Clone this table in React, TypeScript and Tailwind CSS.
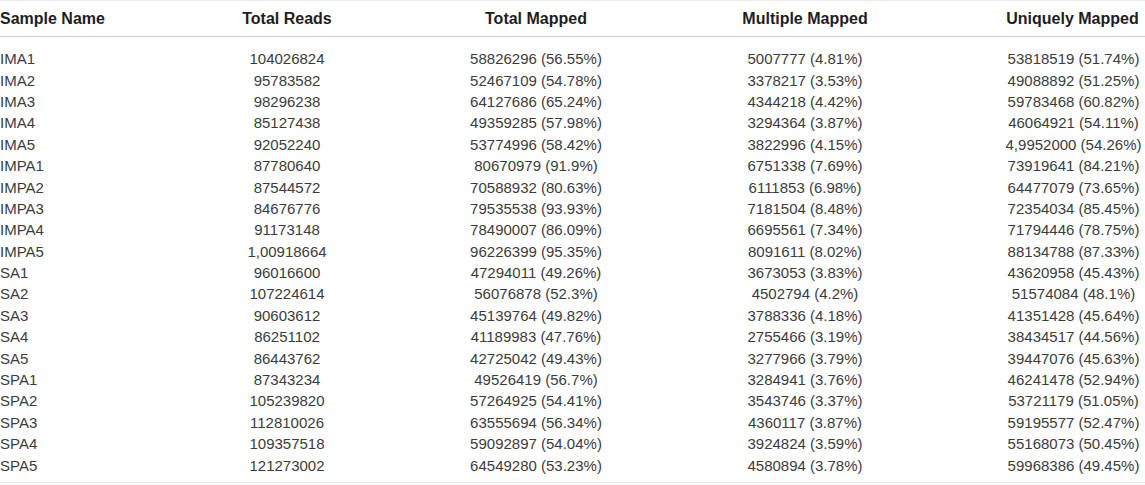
import React from "react"

type Row = [string, string, string, string, string]

const rows: Row[] = [
    ["IMA1", "104026824", "58826296 (56.55%)", "5007777 (4.81%)", "53818519 (51.74%)"],
    ["IMA2", "95783582", "52467109 (54.78%)", "3378217 (3.53%)", "49088892 (51.25%)"],
    ["IMA3", "98296238", "64127686 (65.24%)", "4344218 (4.42%)", "59783468 (60.82%)"],
    ["IMA4", "85127438", "49359285 (57.98%)", "3294364 (3.87%)", "46064921 (54.11%)"],
    ["IMA5", "92052240", "53774996 (58.42%)", "3822996 (4.15%)", "4,9952000 (54.26%)"],
    ["IMPA1", "87780640", "80670979 (91.9%)", "6751338 (7.69%)", "73919641 (84.21%)"],
    ["IMPA2", "87544572", "70588932 (80.63%)", "6111853 (6.98%)", "64477079 (73.65%)"],
    ["IMPA3", "84676776", "79535538 (93.93%)", "7181504 (8.48%)", "72354034 (85.45%)"],
    ["IMPA4", "91173148", "78490007 (86.09%)", "6695561 (7.34%)", "71794446 (78.75%)"],
    ["IMPA5", "1,00918664", "96226399 (95.35%)", "8091611 (8.02%)", "88134788 (87.33%)"],
    ["SA1", "96016600", "47294011 (49.26%)", "3673053 (3.83%)", "43620958 (45.43%)"],
    ["SA2", "107224614", "56076878 (52.3%)", "4502794 (4.2%)", "51574084 (48.1%)"],
    ["SA3", "90603612", "45139764 (49.82%)", "3788336 (4.18%)", "41351428 (45.64%)"],
    ["SA4", "86251102", "41189983 (47.76%)", "2755466 (3.19%)", "38434517 (44.56%)"],
    ["SA5", "86443762", "42725042 (49.43%)", "3277966 (3.79%)", "39447076 (45.63%)"],
    ["SPA1", "87343234", "49526419 (56.7%)", "3284941 (3.76%)", "46241478 (52.94%)"],
    ["SPA2", "105239820", "57264925 (54.41%)", "3543746 (3.37%)", "53721179 (51.05%)"],
    ["SPA3", "112810026", "63555694 (56.34%)", "4360117 (3.87%)", "59195577 (52.47%)"],
    ["SPA4", "109357518", "59092897 (54.04%)", "3924824 (3.59%)", "55168073 (50.45%)"],
    ["SPA5", "121273002", "64549280 (53.23%)", "4580894 (3.78%)", "59968386 (49.45%)"],
]

const headers = ["Sample Name", "Total Reads", "Total Mapped", "Multiple Mapped", "Uniquely Mapped"]

const cols = "grid grid-cols-[162px_250px_248px_290px_1fr]"

const App: React.FC = () => {
    return (
        <div className="w-[1145px] h-[485px] bg-white font-['Liberation_Sans',Arial,sans-serif]">
            <div className="border-t border-[#ececec]">
                {/* header */}
                <div className={`${cols} h-[36px] items-center text-[16px] font-bold text-[#1e1e1e] border-b border-[#cfcfcf]`}>
                    {headers.map((h, i) => (
                        <div key={h} className={i === 0 ? "text-left" : i === 4 ? "text-center pl-[50px]" : "text-center"}>
                            {h}
                        </div>
                    ))}
                </div>
                {/* body */}
                <div className="pt-[11px] pb-[6px] border-b border-[#ececec] text-[15px] text-[#3c3c3c]">
                    {rows.map((r) => (
                        <div key={r[0]} className={`${cols} h-[21.4px] items-center leading-none`}>
                            {r.map((c, i) => (
                                <div key={i} className={i === 0 ? "text-left" : i === 4 ? "text-center pl-[52px]" : "text-center"}>
                                    {c}
                                </div>
                            ))}
                        </div>
                    ))}
                </div>
            </div>
        </div>
    )
}

export default App
